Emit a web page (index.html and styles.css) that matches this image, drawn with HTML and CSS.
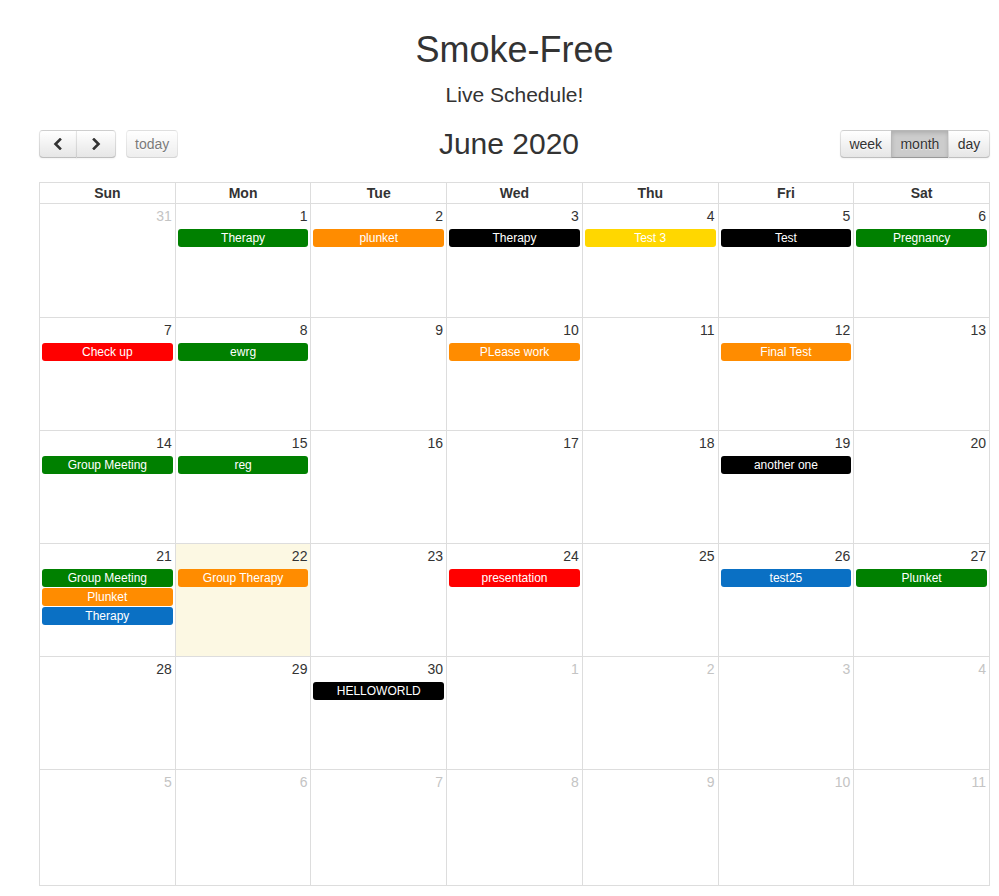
FILE: index.html
```html
<!DOCTYPE html>
<html>
<head>
<meta charset="utf-8">
<title>Smoke-Free</title>
<link rel="stylesheet" href="styles.css">
</head>
<body>
<div class="page">
  <h1 class="title">Smoke-Free</h1>
  <p class="subtitle">Live Schedule!</p>
  <div class="toolbar">
    <div class="tb-left">
      <div class="btn-group">
        <button class="btn btn-first nav-btn" aria-label="prev"><svg width="12" height="12" viewBox="0 0 12 12"><polyline points="8,1.5 3.5,6 8,10.5" fill="none" stroke="#333" stroke-width="2.6" stroke-linecap="square"/></svg></button>
        <button class="btn btn-last nav-btn" aria-label="next"><svg width="12" height="12" viewBox="0 0 12 12"><polyline points="4,1.5 8.5,6 4,10.5" fill="none" stroke="#333" stroke-width="2.6" stroke-linecap="square"/></svg></button>
      </div>
      <button class="btn btn-single btn-disabled">today</button>
    </div>
    <h2 class="month-title">June 2020</h2>
    <div class="tb-right">
      <div class="btn-group">
        <button class="btn btn-first">week</button>
        <button class="btn btn-active">month</button>
        <button class="btn btn-last">day</button>
      </div>
    </div>
  </div>

  <div class="cal">
    <div class="dow">Sun</div><div class="dow">Mon</div><div class="dow">Tue</div><div class="dow">Wed</div><div class="dow">Thu</div><div class="dow">Fri</div><div class="dow">Sat</div>

    <div class="day"><div class="num other">31</div></div>
    <div class="day"><div class="num">1</div><div class="ev green">Therapy</div></div>
    <div class="day"><div class="num">2</div><div class="ev orange">plunket</div></div>
    <div class="day"><div class="num">3</div><div class="ev black">Therapy</div></div>
    <div class="day"><div class="num">4</div><div class="ev yellow">Test 3</div></div>
    <div class="day"><div class="num">5</div><div class="ev black">Test</div></div>
    <div class="day"><div class="num">6</div><div class="ev green">Pregnancy</div></div>

    <div class="day"><div class="num">7</div><div class="ev red">Check up</div></div>
    <div class="day"><div class="num">8</div><div class="ev green">ewrg</div></div>
    <div class="day"><div class="num">9</div></div>
    <div class="day"><div class="num">10</div><div class="ev orange">PLease work</div></div>
    <div class="day"><div class="num">11</div></div>
    <div class="day"><div class="num">12</div><div class="ev orange">Final Test</div></div>
    <div class="day"><div class="num">13</div></div>

    <div class="day"><div class="num">14</div><div class="ev green">Group Meeting</div></div>
    <div class="day"><div class="num">15</div><div class="ev green">reg</div></div>
    <div class="day"><div class="num">16</div></div>
    <div class="day"><div class="num">17</div></div>
    <div class="day"><div class="num">18</div></div>
    <div class="day"><div class="num">19</div><div class="ev black">another one</div></div>
    <div class="day"><div class="num">20</div></div>

    <div class="day"><div class="num">21</div><div class="ev green">Group Meeting</div><div class="ev orange">Plunket</div><div class="ev blue">Therapy</div></div>
    <div class="day today"><div class="num">22</div><div class="ev orange">Group Therapy</div></div>
    <div class="day"><div class="num">23</div></div>
    <div class="day"><div class="num">24</div><div class="ev red">presentation</div></div>
    <div class="day"><div class="num">25</div></div>
    <div class="day"><div class="num">26</div><div class="ev blue">test25</div></div>
    <div class="day"><div class="num">27</div><div class="ev green">Plunket</div></div>

    <div class="day"><div class="num">28</div></div>
    <div class="day"><div class="num">29</div></div>
    <div class="day"><div class="num">30</div><div class="ev black">HELLOWORLD</div></div>
    <div class="day"><div class="num other">1</div></div>
    <div class="day"><div class="num other">2</div></div>
    <div class="day"><div class="num other">3</div></div>
    <div class="day"><div class="num other">4</div></div>

    <div class="day"><div class="num other">5</div></div>
    <div class="day"><div class="num other">6</div></div>
    <div class="day"><div class="num other">7</div></div>
    <div class="day"><div class="num other">8</div></div>
    <div class="day"><div class="num other">9</div></div>
    <div class="day"><div class="num other">10</div></div>
    <div class="day"><div class="num other">11</div></div>
  </div>
</div>
</body>
</html>
```

FILE: styles.css
```css
* { box-sizing: border-box; }
html, body { margin: 0; padding: 0; background: #fff; }
body {
  font-family: "Liberation Sans", Arial, Helvetica, sans-serif;
  color: #333;
  font-size: 14px;
}
.page {
  width: 951px;
  margin-left: 39px;
}
.title {
  margin: 30px 0 0;
  font-size: 36px;
  line-height: 40px;
  font-weight: normal;
  text-align: center;
}
.subtitle {
  margin: 13px 0 0;
  font-size: 21px;
  line-height: 24px;
  text-align: center;
}
.toolbar {
  margin-top: 23px;
  height: 28px;
  display: flex;
  align-items: center;
  margin-bottom: 24px;
}
.tb-left { display: flex; gap: 10px; align-items: center; }
.tb-right { display: flex; align-items: center; }
.month-title {
  flex: 1;
  margin: 0;
  text-align: center;
  font-size: 30px;
  font-weight: normal;
  line-height: 28px;
}
.btn-group { display: flex; }
.btn {
  height: 28px;
  padding: 0 8.7px;
  margin: 0;
  font-family: inherit;
  font-size: 14px;
  color: #333;
  background-color: #f5f5f5;
  background-image: linear-gradient(to bottom, #ffffff, #e6e6e6);
  border: 1px solid;
  border-color: rgba(0,0,0,.1) rgba(0,0,0,.1) rgba(0,0,0,.25);
  box-shadow: inset 0 1px 0 rgba(255,255,255,.2), 0 1px 2px rgba(0,0,0,.05);
  text-shadow: 0 1px 1px rgba(255,255,255,.75);
  border-radius: 0;
  cursor: pointer;
}
.btn + .btn { margin-left: -1px; }
.btn-first { border-radius: 4px 0 0 4px; }
.btn-last { border-radius: 0 4px 4px 0; }
.btn-single { border-radius: 4px; padding: 0 8px; }
.nav-btn {
  width: 38px;
  padding: 0;
  display: flex;
  align-items: center;
  justify-content: center;
}
.nav-btn.btn-last { width: 40px; }
.btn-disabled { opacity: .65; box-shadow: none; cursor: default; }
.btn-active {
  background-color: #ccc;
  background-image: none;
  box-shadow: inset 0 2px 4px rgba(0,0,0,.15), 0 1px 2px rgba(0,0,0,.05);
}

.cal {
  display: grid;
  grid-template-columns: repeat(7, 1fr);
  grid-template-rows: 21px 114px 113px 113px 113px 113px 116px;
  border-top: 1px solid #ddd;
  border-left: 1px solid #ddd;
}
.dow {
  border-right: 1px solid #ddd;
  border-bottom: 1px solid #ddd;
  font-weight: bold;
  text-align: center;
  line-height: 20px;
  font-size: 14px;
}
.day {
  border-right: 1px solid #ddd;
  border-bottom: 1px solid #ddd;
  padding-top: 2px;
}
.today { background: #fcf8e3; }
.num {
  text-align: right;
  padding: 0 3px 0 0;
  line-height: 20px;
  height: 20px;
  font-size: 14px;
  color: #333;
}
.num.other { color: #c4c4c4; }
.ev {
  margin: 3px 2px 0 2px;
  height: 18px;
  line-height: 18px;
  border-radius: 3px;
  color: #fff;
  font-size: 12px;
  text-align: center;
  white-space: nowrap;
  overflow: hidden;
}
.ev + .ev { margin-top: 1px; }
.green { background: #008000; }
.orange { background: #ff8c00; }
.black { background: #000; }
.yellow { background: #ffd700; }
.red { background: #ff0000; }
.blue { background: #0a70c4; }
```
